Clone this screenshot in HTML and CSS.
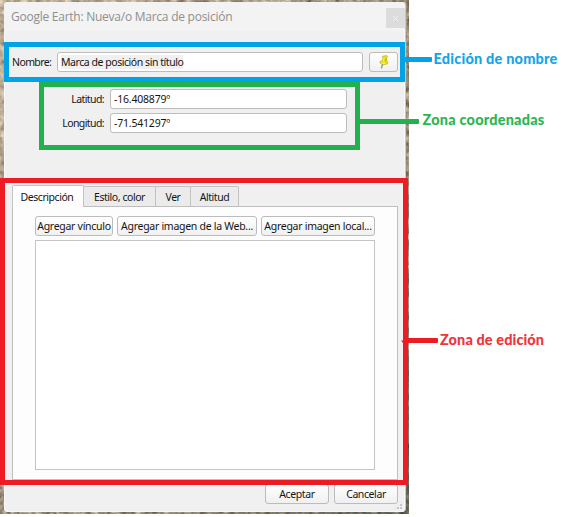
FILE: index.html
```html
<!DOCTYPE html>
<html lang="es">
<head>
<meta charset="utf-8">
<title>Google Earth: Nueva/o Marca de posición</title>
<link rel="stylesheet" href="styles.css">
</head>
<body>
<main class="figure">
  <div class="capture">
    <svg class="terrain" width="409" height="514" aria-hidden="true">
      <filter id="ground" x="0" y="0" width="100%" height="100%" color-interpolation-filters="sRGB">
        <feTurbulence type="fractalNoise" baseFrequency="0.14" numOctaves="3" seed="4"/>
        <feColorMatrix values="1.1 0 0 0 0.06  1.08 0 0 0 0.02  1 0 0 0 -0.02  0 0 0 0 1"/>
      </filter>
      <linearGradient id="shade" x1="0" y1="0" x2="1" y2="1">
        <stop offset="0" stop-color="#f0dcc0" stop-opacity=".5"/>
        <stop offset=".5" stop-color="#b0a596" stop-opacity=".2"/>
        <stop offset="1" stop-color="#26332c" stop-opacity=".5"/>
      </linearGradient>
      <rect width="409" height="514" filter="url(#ground)"/>
      <rect width="409" height="514" fill="url(#shade)"/>
    </svg>
    <section class="dialog">
      <header class="titlebar">
        <h1 class="title">Google Earth: Nueva/o Marca de posición</h1>
        <button class="close" aria-label="Cerrar"><svg width="7" height="7" viewBox="0 0 7 7"><path d="M1 1l5 5M6 1l-5 5" stroke="#f0f0f0" stroke-width="1"/></svg></button>
      </header>
      <div class="name-row">
        <span class="label name-label">Nombre:</span>
        <div class="field name-field"><span class="selected">Marca de posición sin título</span></div>
        <button class="btn pin" aria-label="Icono">
          <svg width="10" height="14" viewBox="0 0 10 14">
            <path d="M3.6 9L2.4 13.4" stroke="#8c8c8c" stroke-width="1.3"/>
            <path d="M3.2 1.2L7.8.5l.8 1.2-1 1.1.2 2.9 1.2 1.5-.8 1.9-3.9.6-3.5-1.8.4-1.4 2-1 .9-2.6-.8-.9z" fill="#e9df16" stroke="#b3ab1e" stroke-width=".6"/>
            <path d="M5 3.2L4.4 6M2.3 7.8l4 1" stroke="#fff870" stroke-width=".9"/>
            <path d="M6.9 3.4v2.8" stroke="#b0a60c" stroke-width=".9"/>
          </svg>
        </button>
      </div>
      <div class="coords">
        <span class="label">Latitud:</span><div class="field number">-16.408879º</div>
        <span class="label">Longitud:</span><div class="field number">-71.541297º</div>
      </div>
      <nav class="tabs">
        <span class="tab active">Descripción</span>
        <span class="tab style-tab">Estilo, color</span>
        <span class="tab view-tab">Ver</span>
        <span class="tab alt-tab">Altitud</span>
      </nav>
      <div class="panel">
        <div class="tools">
          <button class="btn link"><span>Agregar vínculo</span></button>
          <button class="btn web"><span>Agregar imagen de la Web...</span></button>
          <button class="btn local"><span>Agregar imagen local...</span></button>
        </div>
        <div class="editor"></div>
      </div>
      <footer class="actions">
        <button class="btn ok"><span>Aceptar</span></button>
        <button class="btn cancel"><span>Cancelar</span></button>
      </footer>
      <i class="grip"></i>
    </section>
  </div>
  <div class="frame frame-name"></div>
  <div class="frame frame-coords"></div>
  <div class="frame frame-edit"></div>
  <div class="line line-name"></div>
  <div class="line line-coords"></div>
  <div class="line line-edit"></div>
  <div class="note note-name">Edición de nombre</div>
  <div class="note note-coords">Zona coordenadas</div>
  <div class="note note-edit">Zona de edición</div>
</main>
</body>
</html>
```
FILE: styles.css
```css
* { box-sizing: border-box; }
body { margin: 0; background: #fff; font: 10.5px/16px "Noto Sans", sans-serif; letter-spacing: -.45px; color: #151515; }
.figure { position: relative; width: 569px; height: 517px; overflow: hidden; }
.capture { position: relative; width: 409px; height: 514px; padding: 2px 3px 2px 4px; background: #9c9080; }
.terrain { position: absolute; inset: 0; }
.dialog { position: relative; width: 402px; height: 510px; background: #f0f0f0; border-radius: 4px; box-shadow: inset 0 0 0 1px #f8f8f8; border-right: 1px solid #c9c7c4; display: flex; flex-direction: column; }
.titlebar { display: flex; justify-content: space-between; height: 29px; padding: 6px 0 0 7px; background: #f3f3f3; border-radius: 4px 4px 0 0; flex: none; }
.title { margin: 0; font: 12px/18px "Open Sans", sans-serif; letter-spacing: -.25px; color: #8f8f8f; white-space: nowrap; }
.close { width: 19px; height: 20px; border: 0; padding: 0; background: #dcdcdc; display: grid; place-items: center; }
.label, .field, .tab, .btn span { white-space: nowrap; }
.name-row { display: flex; margin: 21px 7px 0 8px; height: 20px; align-items: center; }
.name-label { width: 45px; flex: none; letter-spacing: -.6px; }
.field { height: 20px; border: 1px solid #bdbdbd; border-radius: 3px; background: #fff; padding: 0 3px; line-height: 18px; display: flex; align-items: center; }
.name-field { width: 306px; }
.selected { background: #f0f0f0; height: 14px; line-height: 14px; }
.number { letter-spacing: -.2px; }
.btn { height: 20px; border: 1px solid #bcbcbc; border-radius: 3px; background: linear-gradient(#fff, #f0f0f0); font: inherit; letter-spacing: -.28px; color: inherit; padding: 0; display: flex; align-items: center; justify-content: center; }
.pin { width: 29px; margin-left: 6px; }
.coords { display: grid; grid-template-columns: 100px 237px; column-gap: 6px; row-gap: 4px; margin-top: 17px; align-items: center; }
.coords .label { justify-self: end; letter-spacing: -.6px; }
.tabs { display: flex; align-items: flex-end; height: 22px; margin: 52px 0 0 8px; position: relative; z-index: 1; }
.tab { height: 20px; margin-bottom: 1px; border: 1px solid #c3c3c3; border-left: 0; border-bottom: 0; background: #ebebeb; text-align: center; line-height: 20px; }
.active { width: 72px; height: 22px; margin-bottom: 0; padding-right: 2px; border-left: 1px solid #c3c3c3; border-radius: 2px 2px 0 0; background: #fdfdfd; line-height: 22px; }
.style-tab { width: 72px; }
.view-tab { width: 35px; }
.alt-tab { width: 48px; border-radius: 0 2px 0 0; }
.panel { margin: -1px 7px 0 8px; height: 274px; border: 1px solid #bfbfbf; background: #fdfdfd; padding: 9px 22px; flex: none; }
.tools { display: flex; gap: 4px; }
.link { width: 78px; }
.web { width: 140px; }
.local { width: 114px; }
.editor { width: 340px; height: 230px; margin-top: 4px; border: 1px solid #c4c4c4; background: #fff; }
.actions { display: flex; justify-content: flex-end; gap: 5px; margin: 4px 7px 0; }
.ok, .cancel { width: 64px; letter-spacing: -.4px; }
.grip { position: absolute; right: 2px; bottom: 2px; width: 9px; height: 9px; background: radial-gradient(circle at 1px 1px, #c6c6c6 .7px, transparent 1px) 0 0 / 3px 3px; clip-path: polygon(100% 0, 100% 100%, 0 100%); }
.frame { position: absolute; border: 5px solid; }
.frame-name { left: 4px; top: 42px; width: 401px; height: 40px; border-color: #00a2e8; }
.frame-coords { left: 39px; top: 82px; width: 321px; height: 68px; border-color: #22b14c; }
.frame-edit { left: 0; top: 178px; width: 408px; height: 307px; border-color: #ed1c24; }
.line { position: absolute; height: 5px; border-radius: 0 1px 1px 0; }
.line-name { left: 405px; top: 57px; width: 27px; background: #00a2e8; }
.line-coords { left: 360px; top: 119px; width: 59px; background: #22b14c; }
.line-edit { left: 401px; top: 338px; width: 37px; background: #ed1c24; clip-path: polygon(0 50%, 2px 50%, 2px 0, 100% 0, 100% 100%, 2px 100%); }
.note { position: absolute; font: 900 14.5px/20px Lato, sans-serif; letter-spacing: .2px; white-space: nowrap; }
.note-name { left: 433.5px; top: 49px; color: #16a4e9; }
.note-coords { left: 422.5px; top: 110px; color: #2cb552; }
.note-edit { left: 440px; top: 330px; letter-spacing: .1px; color: #ef343b; }
```
